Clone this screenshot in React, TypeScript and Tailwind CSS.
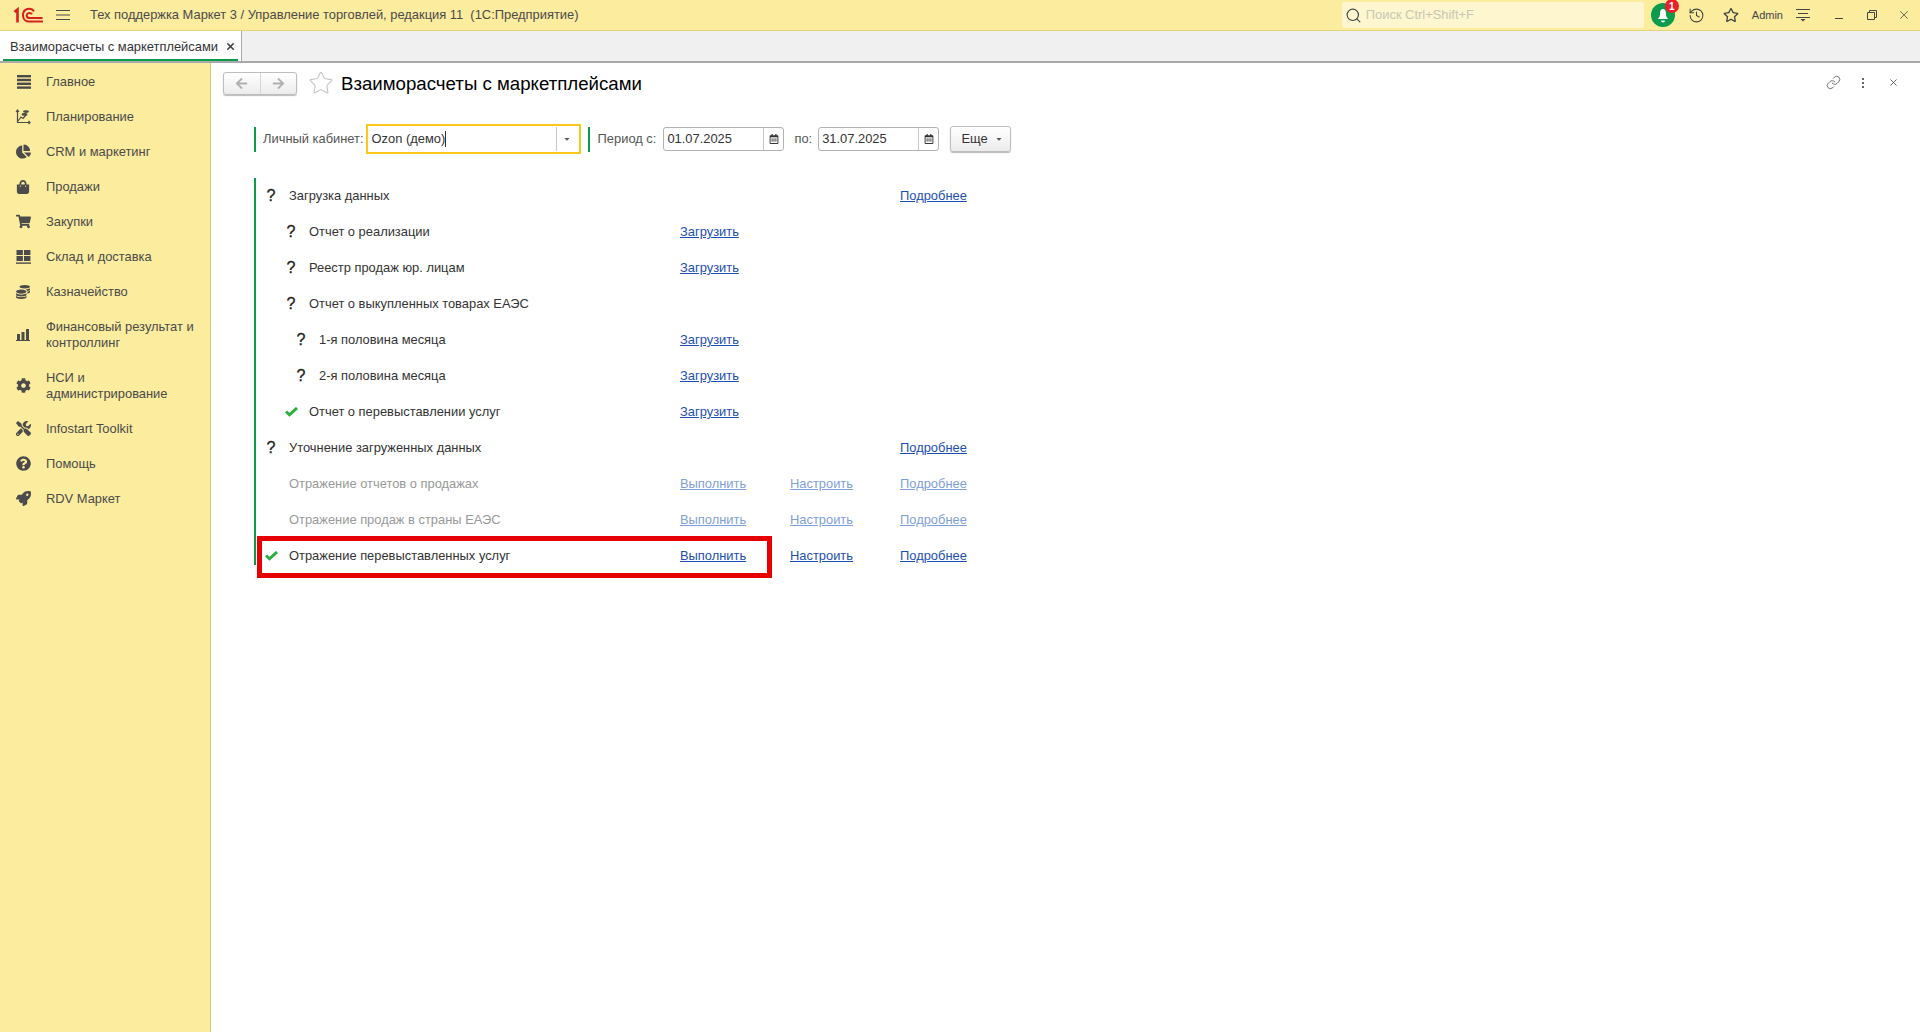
import React from 'react';
import { FaChartPie, FaShoppingBag, FaShoppingCart, FaCoins, FaCog, FaTools, FaQuestionCircle, FaRocket, FaRegStar, FaArrowLeft, FaArrowRight, FaRegCalendarAlt, FaCaretDown } from 'react-icons/fa';
import { LuHistory, LuLink, LuX, LuSearch, LuStar } from 'react-icons/lu';

const font = { fontFamily: '"Liberation Sans", Arial, sans-serif' };

const Burger = () => (
  <svg width="14" height="14" viewBox="0 0 14 14" fill="#4b4b4b" className="ml-[2px]">
    <rect y="0" width="14" height="2.4" />
    <rect y="3.8" width="14" height="2.4" />
    <rect y="7.6" width="14" height="2.4" />
    <rect y="11.4" width="14" height="2.4" />
  </svg>
);

const Plan = () => (
  <svg width="16" height="16" viewBox="0 0 16 16" fill="none" stroke="#4b4b4b" strokeWidth="1.2">
    <path d="M2.5 1v12.5H15" />
    <path d="M1 3l1.5-2L4 3M13.5 12l1.5 1.5L13.5 15" />
    <path d="M3 12l3-4 2 1.5 3-3.5" />
    <ellipse cx="11" cy="2.6" rx="3" ry="1.3" fill="#4b4b4b" stroke="none" />
    <ellipse cx="9.5" cy="5.4" rx="3" ry="1.3" fill="#4b4b4b" stroke="none" />
  </svg>
);

const Grid4 = () => (
  <svg width="15" height="14" viewBox="0 0 15 14" fill="#4b4b4b">
    <rect x="0.5" y="0" width="6.4" height="5" />
    <rect x="8" y="0" width="6.4" height="5" />
    <rect x="0.5" y="6" width="6.4" height="5" />
    <rect x="8" y="6" width="6.4" height="5" />
    <rect x="0" y="12.4" width="15" height="1.4" />
  </svg>
);

const Bars = () => (
  <svg width="14" height="12" viewBox="0 0 14 12" fill="#4b4b4b">
    <rect x="1" y="5" width="3" height="6" />
    <rect x="5.5" y="3" width="3" height="8" />
    <rect x="10" y="0" width="3" height="11" />
    <rect x="0" y="11" width="14" height="1" />
  </svg>
);

const Logo = () => (
  <svg width="30" height="17" viewBox="0 0 30 17" fill="none" stroke="#d9201f">
    <path d="M1.5 5l3-2.5v13" strokeWidth="2.6" />
    <path d="M21 4.4A6 6 0 0 0 10 7.5v1.5a6 6 0 0 0 6 5.5h14" strokeWidth="2" />
    <path d="M19 7.2A3 3 0 0 0 13.6 8.5a3 3 0 0 0 3 2.6h13" strokeWidth="2" />
  </svg>
);

const Tick = () => (
  <svg width="13" height="10" viewBox="0 0 13 10" fill="none" stroke="#2bae3f" strokeWidth="3">
    <path d="M1 4.5l3.5 3.3L12 1" />
  </svg>
);

const menu = [
  { icon: <Burger />, label: 'Главное', h: 'h-[35px]' },
  { icon: <Plan />, label: 'Планирование', h: 'h-[35px]' },
  { icon: <FaChartPie size={15} color="#4b4b4b" />, label: 'CRM и маркетинг', h: 'h-[35px]' },
  { icon: <FaShoppingBag size={14} color="#4b4b4b" />, label: 'Продажи', h: 'h-[35px]' },
  { icon: <FaShoppingCart size={15} color="#4b4b4b" />, label: 'Закупки', h: 'h-[35px]' },
  { icon: <Grid4 />, label: 'Склад и доставка', h: 'h-[35px]' },
  { icon: <FaCoins size={14} color="#4b4b4b" />, label: 'Казначейство', h: 'h-[35px]' },
  { icon: <Bars />, label: 'Финансовый результат и контроллинг', h: 'h-[51px]' },
  { icon: <FaCog size={15} color="#4b4b4b" />, label: 'НСИ и администрирование', h: 'h-[51px]' },
  { icon: <FaTools size={15} color="#4b4b4b" />, label: 'Infostart Toolkit', h: 'h-[35px]' },
  { icon: <FaQuestionCircle size={15} color="#4b4b4b" />, label: 'Помощь', h: 'h-[35px]' },
  { icon: <FaRocket size={15} color="#4b4b4b" />, label: 'RDV Маркет', h: 'h-[35px]' },
];

type Row = {
  status?: 'q' | 'ok';
  label: string;
  indent: string;
  faded?: boolean;
  col1?: string;
  col2?: string;
  col3?: string;
};

const rows: Row[] = [
  { status: 'q', label: 'Загрузка данных', indent: 'pl-[7px]', col3: 'Подробнее' },
  { status: 'q', label: 'Отчет о реализации', indent: 'pl-[27px]', col1: 'Загрузить' },
  { status: 'q', label: 'Реестр продаж юр. лицам', indent: 'pl-[27px]', col1: 'Загрузить' },
  { status: 'q', label: 'Отчет о выкупленных товарах ЕАЭС', indent: 'pl-[27px]' },
  { status: 'q', label: '1-я половина месяца', indent: 'pl-[37px]', col1: 'Загрузить' },
  { status: 'q', label: '2-я половина месяца', indent: 'pl-[37px]', col1: 'Загрузить' },
  { status: 'ok', label: 'Отчет о перевыставлении услуг', indent: 'pl-[27px]', col1: 'Загрузить' },
  { status: 'q', label: 'Уточнение загруженных данных', indent: 'pl-[7px]', col3: 'Подробнее' },
  { faded: true, label: 'Отражение отчетов о продажах', indent: 'pl-[7px]', col1: 'Выполнить', col2: 'Настроить', col3: 'Подробнее' },
  { faded: true, label: 'Отражение продаж в страны ЕАЭС', indent: 'pl-[7px]', col1: 'Выполнить', col2: 'Настроить', col3: 'Подробнее' },
  { status: 'ok', label: 'Отражение перевыставленных услуг', indent: 'pl-[7px]', col1: 'Выполнить', col2: 'Настроить', col3: 'Подробнее' },
];

const DateInput = ({ value }: { value: string }) => (
  <div className="flex h-[24px] w-[121px] items-center rounded-[3px] border border-[#b3b3b3] bg-white">
    <span className="flex-1 pl-[3px] text-[#333]">{value}</span>
    <span className="flex h-full w-[20px] items-center justify-center border-l border-[#c8c8c8]">
      <FaRegCalendarAlt size={10} color="#333" />
    </span>
  </div>
);

export default function App() {
  return (
    <div style={font} className="relative flex h-screen w-full flex-col overflow-hidden bg-white text-[12.9px] text-[#333]">
      {/* top bar */}
      <header className="flex h-[31px] shrink-0 items-center border-b border-[#e6d47a] bg-[#fbec9e]">
        <div className="flex w-[43px] justify-end">
          <Logo />
        </div>
        <div className="ml-[13px]">
          <svg width="14" height="12" viewBox="0 0 14 12" stroke="#4b4b4b" strokeWidth="1">
            <path d="M0 1.5h14M0 6h14M0 10.5h14" />
          </svg>
        </div>
        <span className="ml-[20px] whitespace-pre text-[#4a4a4a]">Тех поддержка Маркет 3 / Управление торговлей, редакция 11  (1С:Предприятие)</span>
        <div className="ml-auto flex h-full items-center">
          <div className="flex h-[26px] w-[302px] items-center rounded-[3px] bg-[#fdf6cf] pl-[3px]">
            <LuSearch size={17} color="#444" strokeWidth={1.6} />
            <span className="ml-[4px] text-[#c9c6b4]">Поиск Ctrl+Shift+F</span>
          </div>
          <div className="relative ml-[7px] flex h-[24px] w-[24px] items-center justify-center rounded-full bg-[#0c9a4c]">
            <svg width="14" height="15" viewBox="0 0 14 15" fill="white">
              <path d="M7 1C4.5 1 4 3.5 4 6c0 2.5-1 4-2.5 5h11C11 10 10 8.5 10 6c0-2.5-.5-5-3-5zM5 12.5h4a2 2 0 0 1-4 0z" />
            </svg>
            <span className="absolute right-[-4px] top-[-4px] flex h-[14px] w-[14px] items-center justify-center rounded-full bg-[#e8202a] text-[10px] font-bold text-white">1</span>
          </div>
          <div className="ml-[13px]"><LuHistory size={17} color="#444" strokeWidth={1.5} /></div>
          <div className="ml-[18px]"><FaRegStar size={16} color="#444" /></div>
          <span className="ml-[13px] text-[11px] text-[#444]">Admin</span>
          <div className="ml-[13px]">
            <svg width="14" height="14" viewBox="0 0 14 14" fill="#444">
              <rect x="0" y="1" width="14" height="1" />
              <rect x="2" y="5" width="10" height="1" />
              <rect x="0" y="9" width="14" height="1" />
              <path d="M4.5 11h5L7 13.5z" />
            </svg>
          </div>
          <div className="ml-[24px]">
            <svg width="10" height="10" viewBox="0 0 10 10" fill="#444"><rect x="1" y="8" width="8" height="1" /></svg>
          </div>
          <div className="ml-[23px]">
            <svg width="10" height="10" viewBox="0 0 10 10" fill="none" stroke="#444"><path d="M.5 2.5h7v7h-7zM2.500 2.500v-2h7v7h-2" /></svg>
          </div>
          <div className="ml-[20px] mr-[9px]"><LuX size={14} color="#444" strokeWidth={1.3} /></div>
        </div>
      </header>

      {/* tabs */}
      <div className="flex h-[32px] shrink-0 border-b-2 border-[#a9a9a9] bg-[#f0f0f0]">
        <div className="flex h-[30px] w-[242px] flex-col border-r border-[#a9a9a9] bg-white">
          <div className="flex flex-1 items-center pl-[10px] pt-[3px]">
            <span className="text-[#333]">Взаиморасчеты с маркетплейсами</span>
            <LuX size={11} color="#444" strokeWidth={3.5} className="ml-[7px]" />
          </div>
          <div className="ml-[3px] h-[2px] w-[235px] bg-[#0c9a4c]" />
        </div>
      </div>

      <div className="flex flex-1 overflow-hidden">
        {/* sidebar */}
        <aside className="w-[211px] shrink-0 border-r border-[#d6c67a] bg-[#fbec9e] pt-[1px]">
          {menu.map((m) => (
            <div key={m.label} className={`flex items-center ${m.h}`}>
              <span className="flex w-[46px] shrink-0 justify-center">{m.icon}</span>
              <span className="w-[156px] leading-[16px] text-[#4a4a4a]">{m.label}</span>
            </div>
          ))}
        </aside>

        {/* content */}
        <main className="flex-1 pl-[12px]">
          <div className="flex h-[60px] items-start pt-[9px]">
            <div className="flex h-[23px] w-[74px] rounded-[3px] border border-[#bdbdbd] bg-gradient-to-b from-white to-[#ececec] shadow-[0_1px_1px_#bbb]">
              <span className="flex flex-1 items-center justify-center border-r border-[#d5d5d5]"><FaArrowLeft size={13} color="#b0b0b0" /></span>
              <span className="flex flex-1 items-center justify-center"><FaArrowRight size={13} color="#b0b0b0" /></span>
            </div>
            <div className="ml-[11px] mt-[-2px]"><LuStar size={26} color="#c4c4c4" strokeWidth={1} /></div>
            <span className="ml-[7px] text-[18.67px] leading-[24px] text-black">Взаиморасчеты с маркетплейсами</span>
            <div className="ml-auto flex items-center pt-[3px]">
              <LuLink size={15} color="#666" strokeWidth={1.5} />
              <span className="ml-[21px] flex flex-col gap-[2px]">
                <i className="h-[2px] w-[2px] bg-[#666]" />
                <i className="h-[2px] w-[2px] bg-[#666]" />
                <i className="h-[2px] w-[2px] bg-[#666]" />
              </span>
              <LuX size={11} color="#555" strokeWidth={2} className="ml-[24px] mr-[21px]" />
            </div>
          </div>

          {/* filter row */}
          <div className="ml-[31px] flex h-[32px] items-center">
            <div className="h-[25px] w-[2px] bg-[#0c9a4c]" />
            <span className="ml-[7px] text-[#555]">Личный кабинет:</span>
            <div className="ml-[2px] flex h-[30px] w-[215px] items-center border-2 border-[#fbc91e] bg-white">
              <span className="pl-[4px] text-[#333]">Ozon (демо)</span>
              <span className="h-[16px] w-px bg-[#333]" />
              <span className="ml-auto flex h-[24px] w-[23px] items-center justify-center border-l border-[#c8c8c8] pr-[2px]">
                <FaCaretDown size={8} color="#555" />
              </span>
            </div>
            <div className="ml-[7px] h-[25px] w-[2px] bg-[#0c9a4c]" />
            <span className="ml-[8px] text-[#555]">Период с:</span>
            <div className="ml-[7px]"><DateInput value="01.07.2025" /></div>
            <span className="ml-[10px] text-[#555]">по:</span>
            <div className="ml-[6px]"><DateInput value="31.07.2025" /></div>
            <div className="ml-[11px] flex h-[26px] w-[61px] items-center justify-center rounded-[3px] border border-[#bdbdbd] bg-gradient-to-b from-white to-[#ececec] pl-[3px] shadow-[0_1px_1px_#bbb]">
              <span className="text-[#333]">Еще</span>
              <FaCaretDown size={8} color="#555" className="ml-[7px]" />
            </div>
          </div>

          {/* steps */}
          <div className="ml-[31px] mt-[23px] flex w-[760px]">
            <div className="h-[387px] w-[2px] shrink-0 bg-[#0c9a4c]" />
            <div className="flex-1">
              {rows.map((r) => (
                <div key={r.label} className="flex h-[36px] items-center">
                  <div className={`flex w-[424px] items-center ${r.indent}`}>
                    <span className="flex w-[16px] shrink-0 justify-center">
                      {r.status === 'ok' && <Tick />}
                      {r.status === 'q' && <span className="text-[16px] leading-[16px] text-[#222] [-webkit-text-stroke:0.3px_#222]">?</span>}
                    </span>
                    <span className={`ml-[10px] ${r.faded ? 'text-[#999]' : 'text-[#333]'}`}>{r.label}</span>
                  </div>
                  <a className={`w-[110px] underline ${r.faded ? 'text-[#7f9fd8]' : 'text-[#1d4fb0]'}`}>{r.col1}</a>
                  <a className={`w-[110px] underline ${r.faded ? 'text-[#7f9fd8]' : 'text-[#1d4fb0]'}`}>{r.col2}</a>
                  <a className={`underline ${r.faded ? 'text-[#7f9fd8]' : 'text-[#1d4fb0]'}`}>{r.col3}</a>
                </div>
              ))}
            </div>
          </div>
        </main>
      </div>

      {/* red annotation */}
      <div className="absolute left-[257px] top-[536px] h-[42px] w-[515px] border-[5px] border-[#e60000]" />
    </div>
  );
}
